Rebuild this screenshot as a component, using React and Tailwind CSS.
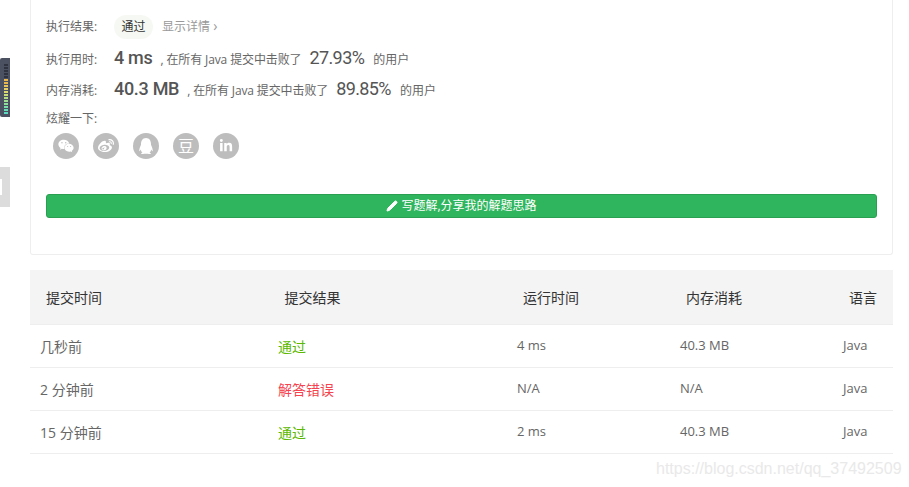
import React from 'react';
import { Pencil } from 'lucide-react';
import { FaWeixin, FaWeibo, FaQq, FaLinkedinIn } from 'react-icons/fa';

const SANS = "font-['Open_Sans','Noto_Sans_CJK_SC',sans-serif]";

const rows = [
    { time: '几秒前', result: '通过', ok: true, run: '4 ms', mem: '40.3 MB' },
    { time: '2 分钟前', result: '解答错误', ok: false, run: 'N/A', mem: 'N/A' },
    { time: '15 分钟前', result: '通过', ok: true, run: '2 ms', mem: '40.3 MB' },
];

const meterColors = ['#2f3340', '#2f3340', '#2f3340', '#2f3340', '#2f3340', '#e8b84e', '#e8b84e', '#e8c65a', '#e6d066', '#dcd86e', '#c8dc78', '#b4de84', '#a0e090', '#8ce09c', '#78e0a8', '#68dcb4', '#5cd8c0'];

const StatLine = ({ label, value, mid, pct }) => (
    <div className="flex items-baseline h-[31px]">
        <span className="w-[68px] text-[12px] text-[#666]">{label}</span>
        <span className="text-[18px] font-medium tracking-[-0.3px] text-[#555] font-['Roboto','Noto_Sans_CJK_SC',sans-serif]">{value}</span>
        <span className="ml-[8px] text-[12px] tracking-[-0.12px] text-[#666]">{mid}</span>
        <span className="ml-[8px] text-[18px] tracking-[-0.6px] text-[#555] font-['Roboto',sans-serif]">{pct}</span>
        <span className="ml-[9px] text-[12px] text-[#666]">的用户</span>
    </div>
);

const Share = ({ children }) => (
    <span className="w-[26px] h-[26px] rounded-full bg-[#bdbdbd] text-white flex items-center justify-center text-[16px]">
        {children}
    </span>
);

export default function App() {
    return (
        <div className={`relative w-[909px] h-[487px] overflow-hidden bg-white ${SANS}`}>
            {/* side tabs cut off by the screenshot edge */}
            <div className="absolute left-0 top-[58px] w-[10px] h-[59px] bg-[#4c5162] rounded-l-[2px] flex flex-col items-center gap-[1px] pt-[6px] pl-[2px]">
                {meterColors.map((color, i) => (
                    <span key={i} className="block w-[4px] h-[2px]" style={{ backgroundColor: color }} />
                ))}
            </div>
            <div className="absolute left-0 top-[167px] w-[10px] h-[40px] bg-[#dcdcdc] flex items-center">
                <span className="block w-[2px] h-[16px] bg-white" />
            </div>

            <div className="ml-[30px] w-[863px] h-[255px] border border-t-0 border-[#eeeeee] rounded-b-[3px] px-[15px] pt-[15px]">
                <div className="flex items-center h-[24px] text-[12px] text-[#666]">
                    <span className="w-[68px]">执行结果:</span>
                    <span className="w-[39px] h-[24px] rounded-full bg-[#f6f9f3] text-[#333] flex items-center justify-center">通过</span>
                    <span className="ml-[9px] text-[#999]">显示详情 <span className="text-[14px] leading-none">›</span></span>
                </div>
                <div className="mt-[5px]">
                    <StatLine label="执行用时:" value="4 ms" mid=", 在所有 Java 提交中击败了" pct="27.93%" />
                    <StatLine label="内存消耗:" value="40.3 MB" mid=", 在所有 Java 提交中击败了" pct="89.85%" />
                </div>
                <div className="mt-[4px] text-[12px] text-[#666]">炫耀一下:</div>
                <div className="mt-[5px] pl-[7px] flex gap-[14px]">
                    <Share><FaWeixin /></Share>
                    <Share><FaWeibo /></Share>
                    <Share><FaQq /></Share>
                    <Share><span className="text-[16px] leading-none">豆</span></Share>
                    <Share><FaLinkedinIn size={14} /></Share>
                </div>
                <button className="mt-[35px] w-full h-[24px] rounded-[3px] bg-[#2fb55d] border border-[#2a9f52] text-white text-[12px] flex items-center justify-center gap-[3px]">
                    <Pencil size={12} fill="white" />
                    写题解,分享我的解题思路
                </button>
            </div>

            <div className="ml-[30px] mt-[15px] w-[863px]">
                <div className="grid grid-cols-[238.5px_238.5px_163px_163px_60px] h-[55px] items-center bg-[#f4f4f4] border-b border-[#eeeeee] pl-[16px] text-[14px] text-[#333]">
                    <span>提交时间</span>
                    <span>提交结果</span>
                    <span>运行时间</span>
                    <span>内存消耗</span>
                    <span>语言</span>
                </div>
                {rows.map((row) => (
                    <div key={row.time} className="grid grid-cols-[238px_239px_163px_163px_60px] h-[43px] items-center border-b border-[#eeeeee] pl-[10px] text-[14px] text-[#666]">
                        <span>{row.time}</span>
                        <span className={row.ok ? 'text-[#5cb800]' : 'text-[#f5434f]'}>{row.result}</span>
                        <span className="text-[13px]">{row.run}</span>
                        <span className="text-[13px]">{row.mem}</span>
                        <span className="text-[13px]">Java</span>
                    </div>
                ))}
            </div>

            <div className="absolute left-[656px] top-[457px] text-[16px] text-[#e9e9e9] font-['Liberation_Sans',sans-serif]">https://blog.csdn.net/qq_37492509</div>
        </div>
    );
}
